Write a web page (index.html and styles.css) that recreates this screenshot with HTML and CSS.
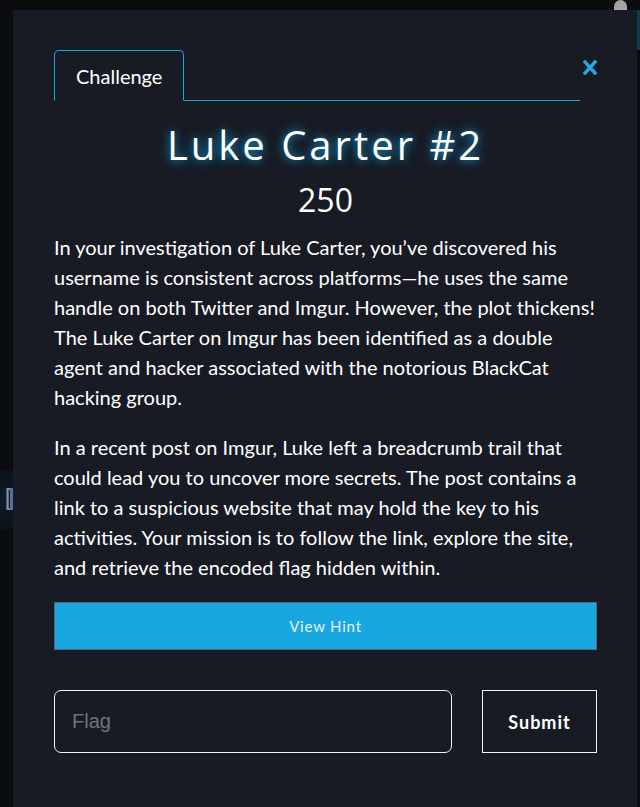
FILE: index.html
```html
<!DOCTYPE html>
<html lang="en">
<head>
<meta charset="utf-8">
<title>Luke Carter #2</title>
<link rel="stylesheet" href="styles.css">
</head>
<body>
<div class="backdrop">
  <span class="bg-fragment"><span class="bg-bracket">[</span><span class="bg-bar"></span></span>
  <span class="bg-avatar"></span>
  <span class="bg-edge"></span>
</div>
<div class="modal">
  <div class="modal-header">
    <nav class="tabs">
      <button class="tab active" type="button">Challenge</button>
    </nav>
    <button class="close" type="button" aria-label="Close">
      <svg width="14" height="15" viewBox="0 0 14 15"><path d="M2 2 L12 13 M12 2 L2 13" stroke="#27a8e3" stroke-width="3.4" stroke-linecap="square" fill="none"/></svg>
    </button>
  </div>
  <h2 class="title">Luke Carter #2</h2>
  <div class="points">250</div>
  <div class="description">
    <p>In your investigation of Luke Carter, you’ve discovered his username is consistent across platforms—he uses the same handle on both Twitter and Imgur. However, the plot thickens! The Luke Carter on Imgur has been identified as a double agent and hacker associated with the notorious BlackCat hacking group.</p>
    <p>In a recent post on Imgur, Luke left a breadcrumb trail that could lead you to uncover more secrets. The post contains a link to a suspicious website that may hold the key to his activities. Your mission is to follow the link, explore the site, and retrieve the encoded flag hidden within.</p>
  </div>
  <button class="hint" type="button">View Hint</button>
  <form class="flag-form">
    <input class="flag-input" type="text" placeholder="Flag">
    <button class="submit" type="button">Submit</button>
  </form>
</div>
</body>
</html>
```
FILE: styles.css
```css
* { box-sizing: border-box; }
html, body { margin: 0; padding: 0; }
body {
  background: #0a0c10;
  width: 640px;
  height: 807px;
  overflow: hidden;
  position: relative;
  font-family: "Lato", "Open Sans", sans-serif;
}
.backdrop { position: absolute; inset: 0; }
.bg-fragment {
  position: absolute;
  left: 0;
  top: 470px;
  width: 14px;
  height: 60px;
  background: linear-gradient(180deg, #0b1118 0%, #0e1c28 50%, #0b1118 100%);
  overflow: hidden;
}
.bg-bracket {
  position: absolute;
  left: 1px;
  top: 16px;
  color: #8a8f96;
  font: 24px/26px "DejaVu Sans Mono", monospace;
}
.bg-bar {
  position: absolute;
  left: 10px;
  top: 18px;
  width: 3px;
  height: 22px;
  background: #5570a8;
}
.bg-avatar {
  position: absolute;
  left: 614px;
  top: 0;
  width: 13px;
  height: 10px;
  background: #a3a3a6;
  border-radius: 7px 7px 0 0;
}
.bg-edge {
  position: absolute;
  left: 637px;
  top: 10px;
  width: 3px;
  height: 40px;
  background: #0f3a4e;
}
.modal {
  position: relative;
  margin: 10px 0 0 13px;
  width: 624px;
  height: 797px;
  background: #181b24;
  padding: 40px 40px 0 41px;
  color: #fff;
}
.modal-header {
  display: flex;
  align-items: flex-start;
}
.tabs {
  flex: 1;
  display: flex;
  border-bottom: 1px solid #1ba6dc;
}
.tab {
  height: 51px;
  margin-bottom: -1px;
  padding: 0 21px;
  background: #181b24;
  color: #fff;
  border: 1px solid #1ba6dc;
  border-bottom-color: #181b24;
  border-radius: 5px 5px 0 0;
  font: 20px/1 "Lato", sans-serif;
}
.close {
  width: 17px;
  height: 20px;
  margin-top: 10px;
  padding: 0;
  background: none;
  border: 0;
  display: flex;
  justify-content: flex-end;
}
.title {
  margin: 20px 0 0;
  text-align: center;
  font: 400 40px/48px "Open Sans", sans-serif;
  letter-spacing: 3px;
  color: #fff;
  text-shadow: 0 0 8px rgba(16, 160, 220, 0.85), 0 0 14px rgba(16, 140, 200, 0.5);
}
.points {
  margin-top: 11px;
  text-align: center;
  font: 400 32px/40px "Open Sans", sans-serif;
  color: #fff;
}
.description {
  margin-top: 12px;
  font-size: 20px;
  line-height: 30px;
  color: #fff;
}
.description p { margin: 0 0 20px; }
.hint {
  display: block;
  width: 100%;
  height: 48px;
  margin-top: 20px;
  background: #18a7e0;
  border: 1px solid #56657a;
  color: #e6f2fa;
  font: 400 15px/1 "Lato", sans-serif;
  letter-spacing: 0.8px;
}
.flag-form {
  display: flex;
  gap: 30px;
  margin-top: 40px;
}
.flag-input {
  flex: 1;
  height: 63px;
  background: #181b24;
  border: 1px solid #f2f2f2;
  border-radius: 7px;
  padding: 0 17px;
  color: #fff;
  font: 20px "Liberation Sans", Arial, sans-serif;
}
.flag-input::placeholder { color: #6c757d; }
.submit {
  width: 115px;
  height: 63px;
  background: #181b24;
  border: 1px solid #f2f2f2;
  color: #fff;
  font: 700 18px/1 "Lato", sans-serif;
  letter-spacing: 1px;
}
```
